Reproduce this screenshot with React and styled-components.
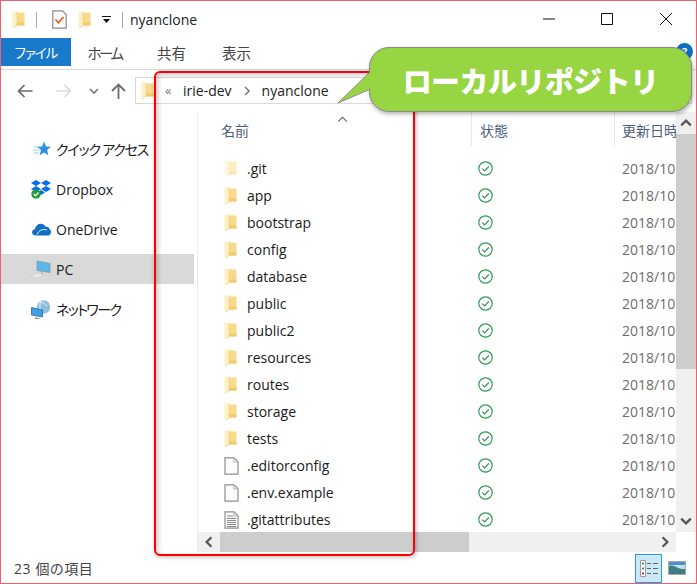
import React from 'react';
import styled, { createGlobalStyle } from 'styled-components';

const GlobalStyle = createGlobalStyle`
  html, body { margin: 0; padding: 0; background: #fff; }
  body { font-family: "Open Sans", "Noto Sans CJK JP", sans-serif; font-feature-settings: "palt"; }
`;

const folders = ['.git', 'app', 'bootstrap', 'config', 'database', 'public', 'public2', 'resources', 'routes', 'storage', 'tests'];

const Folder = ({ faded }) => (
  <svg width="13" height="17" viewBox="0 0 13 17" style={{ opacity: faded ? 0.5 : 1, flex: 'none' }}>
    <path d="M3 1.5h9.5v13H3z" fill="#f7da8c" />
    <path d="M4 11.5h8.5v3H4z" fill="#f1ca6c" />
    <path d="M0.5 .5h4.5v14l-3 2.5h-1.5z" fill="#fdf0c4" />
    <path d="M5 .5v14l-3 2.5" fill="none" stroke="#ecd08a" strokeWidth=".7" />
  </svg>
);

const FileIcon = ({ lines }) => (
  <svg width="15" height="18" viewBox="0 0 15 18" style={{ flex: 'none' }}>
    <path d="M1 .8h9l4 4v12.4H1z" fill="#fcfcfc" stroke="#8f8f8f" strokeWidth="1.2" />
    <path d="M9.8 1v4h4" fill="none" stroke="#b5b5b5" />
    {lines && <path d="M3 5h6M3 7.5h9M3 9.5h9M3 11.5h9M3 13.5h9M3 15.5h9" stroke="#8a8a8a" />}
  </svg>
);

const StatusCheck = () => (
  <svg width="15" height="15" viewBox="0 0 15 15">
    <circle cx="7.5" cy="7.5" r="6.7" fill="none" stroke="#2f9e4f" strokeWidth="1.2" />
    <path d="M4.3 7.6l2.3 2.3 4.2-4.4" fill="none" stroke="#3a8f55" strokeWidth="1.2" />
  </svg>
);

const StarIcon = () => (
  <svg width="18" height="17" viewBox="0 0 18 17">
    <path d="M11 .5l2 5 5 .3-3.9 3.3 1.3 5.2L11 11.4l-4.4 2.9L8 9.1 4.1 5.8l5-.3z" fill="#2b90e0" />
    <path d="M1 6h5M0 9h6M1 12h5" stroke="#9ccdf0" strokeWidth="1.1" />
  </svg>
);

const DropboxIcon = () => (
  <svg width="20" height="19" viewBox="0 0 20 19">
    <path d="M5 0l5 3-5 3-5-3zM15 0l5 3-5 3-5-3zM5 6l5 3-5 3-5-3zM15 6l5 3-5 3-5-3zM10 10l4 2.4-4 2.6-4-2.6z" fill="#0a6cf0" />
    <circle cx="5" cy="14" r="4.7" fill="#1f9d3a" />
    <path d="M2.8 14l1.7 1.7 3-3.2" fill="none" stroke="#fff" strokeWidth="1.3" />
  </svg>
);

const CloudIcon = () => (
  <svg width="19" height="13" viewBox="0 0 19 13">
    <path d="M4 12.5C1.5 12.5 0 11 0 9.3 0 7.6 1.3 6.4 3 6.2 3.6 2.8 6.2 .8 8.8.8c2 0 3.6 1.1 4.4 2.7 2-.3 3.8.8 4.3 2.7.9.3 1.5 1.2 1.5 2.9 0 2-1.3 3.4-3 3.4z" fill="#0f6fc6" />
    <path d="M5 11.5C7 7 11 5.5 15 7" fill="none" stroke="#fff" strokeWidth=".9" />
  </svg>
);

const PcIcon = () => (
  <svg width="21" height="18" viewBox="0 0 21 18">
    <path d="M0 16l8-3 6 2-7 3z" fill="#e8e8e8" stroke="#c9c9c9" strokeWidth=".6" />
    <path d="M7 1l13 2.5v9L7 10.5z" fill="#5cb8ea" stroke="#7d97a8" strokeWidth=".8" />
    <path d="M12 11.5v2.5" stroke="#a8a8a8" strokeWidth="1.2" />
  </svg>
);

const NetworkIcon = () => (
  <svg width="20" height="19" viewBox="0 0 20 19">
    <circle cx="12.5" cy="7" r="6.8" fill="#8fbfdd" />
    <path d="M8 3c3-1 6 0 8 3M10 .6c-1.5 4-1.5 8 0 12.6" fill="none" stroke="#e4f1f8" strokeWidth="1" />
    <path d="M.5 7.5l11 2.5v7l-11-2z" fill="#3f9fe0" stroke="#2b6f9f" strokeWidth=".8" />
    <path d="M5 16.5l-.5 2h4" fill="none" stroke="#7b8a94" />
  </svg>
);

const Arrow = ({ color, flip }) => (
  <svg width="16" height="14" viewBox="0 0 16 14" style={{ transform: flip ? 'scaleX(-1)' : 'none' }}>
    <path d="M15.5 7H1.5M7.5 1L1.5 7l6 6" fill="none" stroke={color} strokeWidth="1.7" />
  </svg>
);

const Chevron = ({ dir, size = 9, width = 1.6, color = '#555' }) => {
  const paths = {
    up: 'M1 7l4-4 4 4',
    down: 'M1 3l4 4 4-4',
    left: 'M7 1L3 5l4 4',
    right: 'M3 1l4 4-4 4',
  };
  return (
    <svg width={size} height={size} viewBox="0 0 10 10">
      <path d={paths[dir]} fill="none" stroke={color} strokeWidth={width} />
    </svg>
  );
};

export default function App() {
  const rows = [
    ...folders.map((name, i) => ({ name, icon: <Folder faded={i === 0} /> })),
    { name: '.editorconfig', icon: <FileIcon /> },
    { name: '.env.example', icon: <FileIcon /> },
    { name: '.gitattributes', icon: <FileIcon lines /> },
  ];
  return (
    <>
      <GlobalStyle />
      <Window>
        <TitleBar>
          <QuickIcons>
            <Folder />
            <TitleSep />
            <svg width="15" height="19" viewBox="0 0 15 19">
              <path d="M.8.8h9.7l3.7 3.7v13.7H.8z" fill="#fbfbfb" stroke="#8c8c8c" strokeWidth="1.2" />
              <path d="M3.5 9.5l3 3.2 5-5.7" fill="none" stroke="#e8571f" strokeWidth="1.6" />
            </svg>
            <Folder />
            <svg width="9" height="8" viewBox="0 0 9 8">
              <path d="M0 .5h9" stroke="#111" />
              <path d="M1 3h7L4.5 7z" fill="#111" />
            </svg>
            <TitleSep />
          </QuickIcons>
          <TitleText>nyanclone</TitleText>
          <WindowButtons>
            <WindowButton>
              <svg width="12" height="12" viewBox="0 0 12 12"><path d="M0 6h12" stroke="#111" /></svg>
            </WindowButton>
            <WindowButton>
              <svg width="12" height="12" viewBox="0 0 12 12"><path d="M.5.5h11v11H.5z" fill="none" stroke="#111" /></svg>
            </WindowButton>
            <WindowButton>
              <svg width="12" height="12" viewBox="0 0 12 12"><path d="M0 0l12 12M12 0L0 12" stroke="#111" /></svg>
            </WindowButton>
          </WindowButtons>
        </TitleBar>

        <RibbonTabs>
          <FileTab>ファイル</FileTab>
          <RibbonTab $w={67} $spacing={-2.5}>ホーム</RibbonTab>
          <RibbonTab $w={67}>共有</RibbonTab>
          <RibbonTab $w={63}>表示</RibbonTab>
          <HelpBadge>?</HelpBadge>
        </RibbonTabs>

        <NavBar>
          <NavButtons>
            <Arrow color="#6b6b6b" />
            <Arrow color="#dcdcdc" flip />
            <Chevron dir="down" size={10} color="#777" />
            <svg width="15" height="16" viewBox="0 0 15 16">
              <path d="M7.5 16V2M1 8l6.5-6.5L14 8" fill="none" stroke="#6b6b6b" strokeWidth="1.8" />
            </svg>
          </NavButtons>
          <AddressBox>
            <Folder />
            <Crumbs>«</Crumbs>
            <span>irie-dev</span>
            <Chevron dir="right" size={10} width={1.5} color="#777" />
            <span>nyanclone</span>
          </AddressBox>
        </NavBar>

        <Body>
          <Sidebar>
            <SideItem $spacing={-1.2}><SideIcon><StarIcon /></SideIcon>クイック アクセス</SideItem>
            <SideItem><SideIcon><DropboxIcon /></SideIcon>Dropbox</SideItem>
            <SideItem><SideIcon><CloudIcon /></SideIcon>OneDrive</SideItem>
            <SideItem $selected><SideIcon><PcIcon /></SideIcon>PC</SideItem>
            <SideItem $spacing={-1.6}><SideIcon><NetworkIcon /></SideIcon>ネットワーク</SideItem>
          </Sidebar>

          <Content>
            <ListArea>
              <List>
                <HeaderRow>
                  <HeaderCell $pad={23}>
                    名前
                    <SortMark><Chevron dir="up" size={11} width={1} color="#666" /></SortMark>
                  </HeaderCell>
                  <HeaderCell $pad={8} $line>状態</HeaderCell>
                  <HeaderCell $pad={7} $line>更新日時</HeaderCell>
                </HeaderRow>
                {rows.map((row) => (
                  <Row key={row.name}>
                    <NameCell>
                      <IconSlot>{row.icon}</IconSlot>
                      {row.name}
                    </NameCell>
                    <StatusCell><StatusCheck /></StatusCell>
                    <DateCell>2018/10/15</DateCell>
                  </Row>
                ))}
              </List>
              <VScroll>
                <ScrollEnd><Chevron dir="up" size={12} width={1.9} /></ScrollEnd>
                <VThumb />
                <ScrollEnd $bottom><Chevron dir="down" size={12} width={1.9} /></ScrollEnd>
              </VScroll>
            </ListArea>
            <HScroll>
              <HEnd><Chevron dir="left" size={12} width={1.9} /></HEnd>
              <HThumb />
              <HEnd $right><Chevron dir="right" size={12} width={1.9} /></HEnd>
            </HScroll>
          </Content>
        </Body>

        <StatusBar>
          <ItemCount>23 個の項目</ItemCount>
          <ViewButtons>
            <ViewButton $active>
              <svg width="18" height="17" viewBox="0 0 18 17">
                <path d="M.5.5h5v16h-5z" fill="#fff" stroke="#9a9a9a" />
                <path d="M2 2.5h2v2H2z" fill="#4a8a9a" />
                <path d="M2 7.5h2v2H2z" fill="#5a8a4a" />
                <path d="M2 12.5h2v2H2z" fill="#c0392b" />
                <path d="M7 3.5h4M13 3.5h5M7 8.5h4M13 8.5h5M7 13.5h4M13 13.5h5" stroke="#666" />
              </svg>
            </ViewButton>
            <ViewButton>
              <svg width="18" height="14" viewBox="0 0 18 14">
                <path d="M.5.5h17v13H.5z" fill="#bfe0f2" stroke="#a5a5a5" />
                <path d="M1 5c3-1 6 0 9 2 3 1 5 1 7 1v5H1z" fill="#3f7d7f" />
                <path d="M1 1h16v3H1z" fill="#4a90d0" />
              </svg>
            </ViewButton>
          </ViewButtons>
        </StatusBar>

        <RedFrame />
        <Callout>
          <CalloutTail width="36" height="64" viewBox="0 0 36 64">
            <path d="M35 22L1 55 35 40z" fill="#97d642" />
            <path d="M33.5 23.5L1 55 33.5 41" fill="none" stroke="#8a8a8a" />
          </CalloutTail>
          ローカルリポジトリ
        </Callout>
      </Window>
    </>
  );
}

const Window = styled.div`
  position: relative;
  box-sizing: border-box;
  width: 697px;
  height: 584px;
  overflow: hidden;
  border: 1px solid #e8636f;
  background: #fff;
  display: flex;
  flex-direction: column;
  color: #1a1a1a;
  font-size: 14px;
`;

const TitleBar = styled.div`
  height: 37px;
  display: flex;
  align-items: center;
`;

const QuickIcons = styled.div`
  display: flex;
  align-items: center;
  width: 129px;
  padding-left: 11px;
  box-sizing: border-box;
  svg:nth-child(3) { margin-left: 15px; }
  svg:nth-child(4) { margin-left: 11px; }
  svg:nth-child(5) { margin-left: 11px; }
`;

const TitleSep = styled.div`
  width: 1px;
  height: 16px;
  background: #a8a8a8;
  margin-left: 11px;
`;

const TitleText = styled.div`
  font-size: 14px;
  color: #222;
`;

const WindowButtons = styled.div`
  margin-left: auto;
  display: flex;
  margin-right: 1px;
`;

const WindowButton = styled.div`
  width: 58.5px;
  height: 37px;
  display: flex;
  align-items: center;
  justify-content: center;
  margin-top: -1px;
`;

const RibbonTabs = styled.div`
  position: relative;
  height: 28px;
  display: flex;
  align-items: center;
  margin-bottom: 3px;
`;

const FileTab = styled.div`
  width: 70px;
  height: 28px;
  background: #1979ca;
  color: #fff;
  font-size: 13.5px;
  letter-spacing: -1px;
  display: flex;
  align-items: center;
  justify-content: center;
`;

const RibbonTab = styled.div`
  width: ${(p) => p.$w}px;
  text-align: center;
  font-size: 14.5px;
  letter-spacing: ${(p) => p.$spacing || 0}px;
  color: #444;
`;

const HelpBadge = styled.div`
  position: absolute;
  right: 3px;
  top: 5px;
  width: 17px;
  height: 17px;
  border-radius: 50%;
  background: #0d6fc4;
  color: #fff;
  font-size: 11px;
  font-weight: 700;
  text-align: center;
  line-height: 17px;
`;

const NavBar = styled.div`
  height: 43px;
  border-top: 1px solid #dadada;
  box-sizing: border-box;
  display: flex;
  align-items: flex-start;
`;

const NavButtons = styled.div`
  width: 134px;
  height: 34px;
  padding-left: 16px;
  box-sizing: border-box;
  display: flex;
  align-items: center;
  margin-top: 4px;
  svg:nth-child(2) { margin-left: 23px; }
  svg:nth-child(3) { margin-left: 17px; }
  svg:nth-child(4) { margin-left: 12px; }
`;

const AddressBox = styled.div`
  flex: 1;
  height: 27px;
  margin: 7px 4px 0 0;
  border: 1px solid #d9d9d9;
  box-sizing: border-box;
  display: flex;
  align-items: center;
  padding-left: 5px;
  font-size: 14px;
  color: #222;
  span:nth-of-type(1) { margin-left: 10px; }
  svg:nth-of-type(2) { margin: 0 10px; }
`;

const Crumbs = styled.div`
  margin: -2px 0 0 11px;
  color: #777;
  font-size: 13px;
  width: 8px;
`;

const Body = styled.div`
  flex: 1;
  display: flex;
  min-height: 0;
`;

const Sidebar = styled.div`
  width: 197px;
  box-sizing: border-box;
  padding-top: 22px;
  border-right: 1px solid #ececec;
  display: flex;
  flex-direction: column;
  gap: 10px;
`;

const SideItem = styled.div`
  width: 193px;
  height: 30px;
  display: flex;
  align-items: center;
  font-size: 14px;
  letter-spacing: ${(p) => p.$spacing || 0}px;
  color: #1a1a1a;
  background: ${(p) => (p.$selected ? '#d9d9d9' : 'transparent')};
`;

const SideIcon = styled.div`
  width: 55px;
  padding-left: 29px;
  box-sizing: border-box;
  display: flex;
  align-items: center;
  justify-content: flex-end;
  padding-right: 5px;
`;

const Content = styled.div`
  flex: 1;
  min-width: 0;
  display: flex;
  flex-direction: column;
`;

const ListArea = styled.div`
  height: 420px;
  display: flex;
`;

const List = styled.div`
  flex: 1;
  min-width: 0;
  overflow: hidden;
`;

const HeaderRow = styled.div`
  position: relative;
  display: grid;
  grid-template-columns: 273px 143px 62px;
  height: 34px;
  margin-bottom: 9px;
`;

const HeaderCell = styled.div`
  padding-left: ${(p) => p.$pad}px;
  padding-top: 8px;
  box-sizing: border-box;
  font-size: 14px;
  color: #4c607a;
  white-space: nowrap;
  overflow: hidden;
  border-left: ${(p) => (p.$line ? '1px solid #e5e5e5' : 'none')};
`;

const SortMark = styled.div`
  position: absolute;
  left: 139px;
  top: -2px;
`;

const Row = styled.div`
  display: grid;
  grid-template-columns: 273px 143px 62px;
  height: 27px;
  align-items: center;
  font-size: 14px;
`;

const NameCell = styled.div`
  display: flex;
  align-items: center;
  padding-left: 26px;
  color: #1a1a1a;
`;

const IconSlot = styled.div`
  width: 23px;
  display: flex;
  align-items: center;
`;

const StatusCell = styled.div`
  padding-left: 7px;
  display: flex;
`;

const DateCell = styled.div`
  padding-left: 8px;
  margin-right: 1px;
  color: #6d6d6d;
  white-space: nowrap;
  overflow: hidden;
`;

const VScroll = styled.div`
  width: 20px;
  background: #f0f0f0;
  display: flex;
  flex-direction: column;
`;

const ScrollEnd = styled.div`
  height: 22px;
  display: flex;
  align-items: center;
  justify-content: center;
  margin-top: ${(p) => (p.$bottom ? 'auto' : '0')};
`;

const VThumb = styled.div`
  height: 235px;
  background: #cdcdcd;
`;

const HScroll = styled.div`
  height: 20px;
  background: #f0f0f0;
  margin-right: 20px;
  display: flex;
  align-items: stretch;
`;

const HEnd = styled.div`
  width: 22px;
  display: flex;
  align-items: center;
  justify-content: center;
  margin-left: ${(p) => (p.$right ? 'auto' : '0')};
`;

const HThumb = styled.div`
  width: 249px;
  background: #cdcdcd;
`;

const StatusBar = styled.div`
  height: 30px;
  display: flex;
  align-items: center;
  padding-left: 13px;
  font-size: 14px;
  color: #444;
`;

const ItemCount = styled.span`
  letter-spacing: .6px;
`;

const ViewButtons = styled.div`
  margin-left: auto;
  margin-right: 6px;
  display: flex;
  align-items: center;
  gap: 1px;
`;

const ViewButton = styled.div`
  width: 27px;
  height: 29px;
  box-sizing: border-box;
  display: flex;
  align-items: center;
  justify-content: center;
  background: ${(p) => (p.$active ? '#cbe8f6' : 'transparent')};
  border: 1px solid ${(p) => (p.$active ? '#26a0da' : 'transparent')};
`;

const RedFrame = styled.div`
  position: absolute;
  left: 153px;
  top: 70px;
  width: 261px;
  height: 485px;
  box-sizing: border-box;
  border: 2.5px solid #f00;
  border-radius: 6px;
  box-shadow: 1px 1px 4px rgba(0, 0, 0, .3), inset 2px 2px 5px rgba(0, 0, 0, .22);
  pointer-events: none;
`;

const Callout = styled.div`
  position: absolute;
  left: 368px;
  top: 46px;
  width: 323px;
  height: 65px;
  box-sizing: border-box;
  background: #97d642;
  border: 1px solid #8a8a8a;
  border-radius: 20px;
  box-shadow: 1px 2px 4px rgba(0, 0, 0, .3);
  color: #fff;
  font-family: "Noto Sans CJK JP", sans-serif;
  font-feature-settings: normal;
  font-size: 29px;
  letter-spacing: -.6px;
  font-weight: 900;
  display: flex;
  align-items: center;
  justify-content: center;
  white-space: nowrap;
`;

const CalloutTail = styled.svg`
  position: absolute;
  left: -33px;
  top: 0;
`;
